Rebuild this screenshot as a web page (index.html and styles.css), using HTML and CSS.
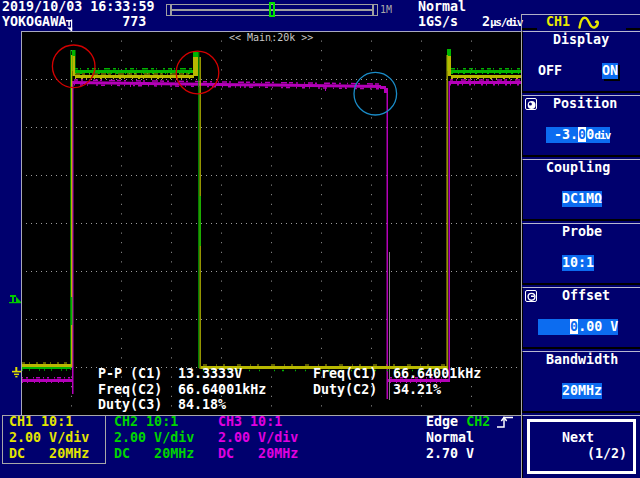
FILE: index.html
```html
<!DOCTYPE html>
<html lang="en">
<head>
<meta charset="utf-8">
<title>Oscilloscope</title>
<link rel="stylesheet" href="styles.css">
</head>
<body>
<div class="scope">
  <div class="left">
    <header class="topbar">
      <div class="date">2019/10/03 16:33:59</div>
      <div class="brand">
        <span>YOKOGAWA</span>
        <svg class="tmark" width="10" height="16" viewBox="0 0 10 16">
          <rect x="0" y="5" width="6" height="1.5" fill="#fff"/>
          <rect x="2.3" y="5" width="1.5" height="6" fill="#fff"/>
          <rect x="5" y="4.5" width="1.2" height="10" fill="#fff"/>
          <polygon points="1,12.5 6.2,12.5 6.2,17" fill="#fff"/>
        </svg>
        <span class="count">773</span>
      </div>
      <div class="timeline">
        <div class="tl-end"></div>
        <div class="tl-bars">
          <div class="tl-bar"></div>
          <div class="tl-bar"></div>
          <div class="tl-pos"></div>
        </div>
        <div class="tl-end"></div>
        <span class="tl-len">1M</span>
      </div>
      <div class="mode">Normal</div>
      <div class="rate">1GS/s</div>
      <div class="tdiv">2<span class="small">μs/div</span></div>
    </header>

    <div class="screen">
      <svg class="gutter" width="21" height="384" viewBox="0 31 21 384">
        <g fill="#00c800">
          <rect x="10" y="295" width="6" height="2"/>
          <rect x="12" y="295" width="2" height="7"/>
          <polygon points="16,296.5 16,302 21,302"/>
          <rect x="9" y="302" width="13" height="1.2"/>
        </g>
        <g fill="#e0e000">
          <rect x="15.3" y="367" width="2" height="4"/>
          <rect x="12" y="370.8" width="9" height="1.6"/>
          <rect x="14" y="373.6" width="5" height="1.5"/>
          <rect x="15.3" y="376" width="2.2" height="1.4"/>
        </g>
      </svg>
      <div class="grat">
        <svg class="wave" width="499" height="383" viewBox="22 32 499 383">
          <g stroke="#9c9c9c" stroke-width="1" fill="none">
            <g stroke-dasharray="1 8.6">
              <line x1="71.5" y1="31" x2="71.5" y2="415"/>
              <line x1="121.5" y1="31" x2="121.5" y2="415"/>
              <line x1="171.5" y1="31" x2="171.5" y2="415"/>
              <line x1="221.5" y1="31" x2="221.5" y2="415"/>
              <line x1="271.5" y1="31" x2="271.5" y2="415"/>
              <line x1="321.5" y1="31" x2="321.5" y2="415"/>
              <line x1="371.5" y1="31" x2="371.5" y2="415"/>
              <line x1="421.5" y1="31" x2="421.5" y2="415"/>
              <line x1="471.5" y1="31" x2="471.5" y2="415"/>
            </g>
            <g stroke-dasharray="1 4">
              <line x1="21" y1="79.5" x2="521" y2="79.5"/>
              <line x1="21" y1="127.5" x2="521" y2="127.5"/>
              <line x1="21" y1="175.5" x2="521" y2="175.5"/>
              <line x1="21" y1="223.5" x2="521" y2="223.5"/>
              <line x1="21" y1="271.5" x2="521" y2="271.5"/>
              <line x1="21" y1="319.5" x2="521" y2="319.5"/>
              <line x1="21" y1="367.5" x2="521" y2="367.5"/>
            </g>
          </g>

          <text x="229" y="40.5" class="svgtxt">&lt;&lt; Main:20k &gt;&gt;</text>

          <!-- magenta CH3 -->
          <g fill="#b400b8">
            <rect x="22" y="379" width="50" height="3"/>
            <rect x="72" y="81" width="1.5" height="313"/>
            <polygon points="73,81 381,85 381,88 73,84"/>
            <rect x="380" y="86" width="6" height="3"/>
            <rect x="384" y="88" width="3" height="5"/>
            <rect x="386.5" y="88" width="1.5" height="311"/>
            <rect x="388" y="379" width="61" height="3"/>
            <rect x="448.5" y="81" width="1.5" height="301"/>
            <rect x="450" y="81" width="71" height="3"/>
            <rect x="130" y="84" width="1" height="3"/>
            <rect x="240" y="85" width="1" height="3"/>
            <rect x="325" y="86" width="1" height="5"/>
            <rect x="345" y="86" width="1" height="3"/>
          </g>
          <g stroke="#b400b8" fill="none">
            <line x1="74" y1="80" x2="380" y2="84" stroke-width="1.5" stroke-dasharray="4 3 2 6 1 3 5 2 2 7 6 2"/>
            <line x1="74" y1="84.8" x2="380" y2="88.8" stroke-width="1.5" stroke-dasharray="1 5 3 4 1 8 2 3 4 6"/>
            <line x1="450" y1="80" x2="521" y2="80" stroke-width="1.5" stroke-dasharray="3 3 1 4 5 2"/>
            <line x1="450" y1="84.8" x2="521" y2="84.8" stroke-width="1.5" stroke-dasharray="1 6 2 3"/>
            <line x1="22" y1="377.8" x2="70" y2="377.8" stroke-width="1.5" stroke-dasharray="1 3 2 5 1 2 4 3"/>
            <line x1="390" y1="377.8" x2="446" y2="377.8" stroke-width="1.5" stroke-dasharray="2 4 1 3 3 2"/>
            <line x1="22" y1="382.5" x2="70" y2="382.5" stroke-width="1" stroke-dasharray="1 4 1 6"/>
            <line x1="390" y1="382.5" x2="446" y2="382.5" stroke-width="1" stroke-dasharray="1 5 1 3"/>
          </g>
          <rect x="389" y="252" width="1" height="148" fill="#808080"/>

          <!-- green CH2 -->
          <g fill="#00b400">
            <rect x="22" y="366" width="49" height="3"/>
            <rect x="202" y="366" width="246" height="3"/>
            <rect x="70.3" y="50" width="1" height="320"/>
            <rect x="72" y="50" width="3.5" height="21"/>
            <rect x="75" y="70" width="119" height="3"/>
            <rect x="193" y="52" width="5" height="19"/>
            <rect x="198.3" y="52" width="1" height="316"/>
            <rect x="447" y="49" width="4" height="22"/>
            <rect x="451" y="70" width="70" height="3"/>
          </g>
          <g stroke="#00b400" fill="none">
            <line x1="75" y1="68.8" x2="193" y2="68.8" stroke-width="1.6" stroke-dasharray="3 2 1 6 2 3 4 2 1 5 6 3"/>
            <line x1="75" y1="73.5" x2="193" y2="73.5" stroke-width="1" stroke-dasharray="1 4 2 7 1 3"/>
            <line x1="451" y1="68.8" x2="521" y2="68.8" stroke-width="1.6" stroke-dasharray="4 2 1 5 3 3"/>
            <line x1="451" y1="73.5" x2="521" y2="73.5" stroke-width="1" stroke-dasharray="2 5 1 4"/>
            <line x1="22" y1="370" x2="70" y2="370" stroke-width="1.6" stroke-dasharray="1 6 1 9 1 4"/>
            <line x1="203" y1="370.5" x2="446" y2="370.5" stroke-width="1.6" stroke-dasharray="1 9 1 14 1 7 2 11"/>
          </g>

          <!-- yellow CH1 -->
          <g fill="#b8b800">
            <rect x="22" y="364" width="49" height="3"/>
            <rect x="71" y="55" width="1.3" height="312"/>
            <rect x="72.5" y="56" width="2.5" height="20"/>
            <rect x="75" y="75" width="119" height="3"/>
            <rect x="193" y="57" width="5" height="19"/>
            <rect x="199.5" y="57" width="1.3" height="312"/>
            <rect x="201" y="366" width="246" height="3"/>
            <rect x="446.5" y="55" width="1.3" height="314"/>
            <rect x="448" y="56" width="3" height="20"/>
            <rect x="451" y="75" width="70" height="3"/>
          </g>
          <g stroke="#b8b800" fill="none">
            <line x1="75" y1="74" x2="193" y2="74" stroke-width="1" stroke-dasharray="5 2 3 4 1 2 6 3"/>
            <line x1="75" y1="78.5" x2="193" y2="78.5" stroke-width="1" stroke-dasharray="1 5 2 3 1 7"/>
            <line x1="451" y1="78.5" x2="521" y2="78.5" stroke-width="1" stroke-dasharray="2 4 1 6"/>
            <line x1="22" y1="363" x2="70" y2="363" stroke-width="1" stroke-dasharray="3 4 1 6 2 5"/>
            <line x1="203" y1="365" x2="446" y2="365" stroke-width="1" stroke-dasharray="4 9 1 6 2 12"/>
          </g>
          <rect x="199.5" y="196" width="1.3" height="50" fill="#00b400"/>
          <rect x="71" y="297" width="1.3" height="28" fill="#00b400"/>

          <g fill="none" stroke-width="1.3">
            <circle cx="73.7" cy="66.3" r="21.3" stroke="#d40000"/>
            <circle cx="197.5" cy="72.5" r="21.3" stroke="#d40000"/>
            <circle cx="375.3" cy="93.7" r="21.3" stroke="#1a8cc8"/>
          </g>
        </svg>
        <div class="meas">
          <span>P-P (C1)</span><span>13.3333V</span><span>Freq(C1)</span><span>66.64001kHz</span>
          <span>Freq(C2)</span><span>66.64001kHz</span><span>Duty(C2)</span><span>34.21%</span>
          <span>Duty(C3)</span><span>84.18%</span>
        </div>
      </div>
    </div>

    <footer class="info">
      <div class="chbox c1">
        <div class="lines">
          <div>CH1 10:1</div>
          <div>2.00 V/div</div>
          <div>DC   20MHz</div>
        </div>
      </div>
      <div class="chinfo c2">
        <div class="lines">
          <div>CH2 10:1</div>
          <div>2.00 V/div</div>
          <div>DC   20MHz</div>
        </div>
      </div>
      <div class="chinfo c3">
        <div class="lines">
          <div>CH3 10:1</div>
          <div>2.00 V/div</div>
          <div>DC   20MHz</div>
        </div>
      </div>
      <div class="trig">
        <div class="lines">
          <div class="trig-l1"><span>Edge&#160;</span><span class="c2">CH2</span><svg class="edge" width="16" height="12" viewBox="0 0 16 12"><path d="M0 11 H7 V1.5 H16" fill="none" stroke="#fff" stroke-width="1.5"/><path d="M4.3 5 L7 1.5 L9.7 5" fill="none" stroke="#fff" stroke-width="1.4"/></svg></div>
          <div>Normal</div>
          <div>2.70 V</div>
        </div>
      </div>
    </footer>
  </div>

  <aside class="right">
    <div class="panel">
      <div class="chtab">
        <span>CH1</span>
        <svg class="chicon" width="23" height="14" viewBox="0 0 23 14">
          <path d="M1.5 12.5 C2.5 5 5 1.5 8 3 C10.5 4.5 11 9 13.5 11.5 C15.5 13.5 18.5 12.5 19.5 9.5 C20.3 7 19.5 5.5 18 7" fill="none" stroke="#e8e800" stroke-width="2.4" stroke-linecap="round"/>
        </svg>
      </div>

      <section class="sec">
        <div class="sec-title pad-30">Display</div>
        <div class="sec-val pad-15"><span>OFF</span><span class="hl on">ON</span></div>
      </section>

      <section class="sec">
        <div class="sec-title pad-2">
          <svg class="knob" width="12" height="12" viewBox="0 0 12 12">
            <rect x="0.5" y="0.5" width="11" height="11" rx="1.5" fill="none" stroke="#fff"/>
            <circle cx="6.6" cy="7" r="3.9" fill="#fff"/>
            <circle cx="5.4" cy="6" r="1.5" fill="#00006e"/>
          </svg>
          <span class="ttl-16">Position</span>
        </div>
        <div class="sec-val pad-23"><span class="hl"> -3.<span class="cur">0</span>0<span class="small">div</span></span></div>
      </section>

      <section class="sec">
        <div class="sec-title pad-23">Coupling</div>
        <div class="sec-val pad-39"><span class="hl">DC1MΩ</span></div>
      </section>

      <section class="sec">
        <div class="sec-title pad-39">Probe</div>
        <div class="sec-val pad-39"><span class="hl">10:1</span></div>
      </section>

      <section class="sec">
        <div class="sec-title pad-2">
          <svg class="knob" width="12" height="12" viewBox="0 0 12 12">
            <rect x="0.5" y="0.5" width="11" height="11" rx="1.5" fill="none" stroke="#fff"/>
            <circle cx="6.5" cy="6.8" r="3.4" fill="none" stroke="#fff" stroke-width="1.4"/>
            <rect x="6" y="5.5" width="3" height="1.5" fill="#fff"/>
          </svg>
          <span class="ttl-25">Offset</span>
        </div>
        <div class="sec-val pad-15"><span class="hl">    <span class="cur">0</span>.00 V</span></div>
      </section>

      <section class="sec">
        <div class="sec-title pad-23">Bandwidth</div>
        <div class="sec-val pad-39"><span class="hl">20MHz</span></div>
      </section>

      <section class="sec last">
        <div class="btn">
          <div class="btn-l1">Next</div>
          <div class="btn-l2">(1/2)</div>
        </div>
      </section>
    </div>
  </aside>
</div>
</body>
</html>
```
FILE: styles.css
```css
* { box-sizing: border-box; }
html, body { margin: 0; padding: 0; }
body {
  width: 640px;
  height: 478px;
  overflow: hidden;
  background: #00006e;
  color: #fff;
  font-family: "DejaVu Sans Mono", "Liberation Mono", monospace;
  font-weight: bold;
  font-size: 13.33px;
}
.scope { display: flex; width: 640px; height: 478px; }
.left { width: 521px; flex: none; display: flex; flex-direction: column; }

/* top bar */
.topbar {
  height: 31px;
  flex: none;
  display: grid;
  grid-template-columns: 164px 252px 64px 1fr;
  grid-template-rows: 14.5px 14.5px;
  padding-left: 2px;
  line-height: 14.5px;
}
.date { grid-column: 1; grid-row: 1; white-space: pre; }
.brand { grid-column: 1; grid-row: 2; display: flex; align-items: flex-start; }
.tmark { flex: none; overflow: visible; }
.count { margin-left: 46px; }
.timeline {
  grid-column: 2;
  grid-row: 1 / span 2;
  display: flex;
  align-items: flex-start;
  margin-top: 4px;
}
.tl-end { width: 5px; height: 12px; border: 1px solid #a0a0a0; flex: none; }
.tl-bars { width: 202px; flex: none; position: relative; display: flex; flex-direction: column; }
.tl-bar { height: 6px; border: 1px solid #a0a0a0; }
.tl-pos {
  position: absolute;
  left: 98px;
  top: -2px;
  width: 6px;
  height: 15px;
  border: 2px solid #00e000;
}
.tl-len { margin-left: 2px; font-size: 10px; line-height: 11px; font-weight: normal; color: #a8a8a8; }
.mode { grid-column: 3; grid-row: 1; }
.rate { grid-column: 3; grid-row: 2; }
.tdiv { grid-column: 4; grid-row: 2; white-space: nowrap; }
.small { font-size: 11px; letter-spacing: -1.3px; }

/* screen */
.screen { height: 384px; flex: none; display: flex; }
.gutter { display: block; flex: none; }
.grat {
  width: 500px;
  flex: none;
  position: relative;
  background: #000;
  border-left: 1px solid #a8a8b8;
  border-top: 1px solid #a8a8c0;
}
.wave { display: block; }
.svgtxt { font-family: "DejaVu Sans Mono", monospace; font-size: 10px; fill: #c8c8c8; font-weight: normal; }
.meas {
  position: absolute;
  left: 76px;
  top: 334.4px;
  display: grid;
  grid-template-columns: 80px 135px 80px auto;
  line-height: 15.5px;
  color: #fff;
}
.meas span { white-space: pre; }

/* bottom info */
.info {
  height: 63px;
  flex: none;
  margin-left: 2px;
  border-top: 1px solid #a8a8a8;
  display: flex;
  line-height: 16px;
}
.lines { margin-top: -2px; }
.lines > div { white-space: pre; height: 16px; }
.chbox {
  width: 104px;
  height: 48px;
  flex: none;
  border: 1px solid #a8a8a8;
  border-top: 0;
  padding-left: 6px;
}
.chinfo { width: 104px; flex: none; padding-left: 8px; }
.trig { margin-left: 112px; }
.lines > .trig-l1 { display: flex; align-items: center; }
.edge { margin-left: 7px; flex: none; }
.c1 { color: #e4e400; }
.c2 { color: #00d400; }
.c3 { color: #e000e0; }

/* right panel */
.right { width: 119px; flex: none; padding-top: 14px; display: flex; flex-direction: column; }
.panel {
  flex: 1;
  border-left: 1px solid #a8a8a8;
  display: flex;
  flex-direction: column;
  overflow: hidden;
}
.chtab {
  height: 17px;
  flex: none;
  border-top: 1px solid #b0b0c8;
  display: flex;
  align-items: flex-start;
  padding-left: 24px;
  line-height: 14.5px;
  color: #e8e800;
  background:
    linear-gradient(#000, #000) left 0 bottom 1px / 15px 2px no-repeat,
    linear-gradient(#000, #000) right 0 bottom 1px / 14px 2px no-repeat;
}
.chicon { margin-left: 8px; flex: none; }
.sec {
  height: 62px;
  flex: none;
  margin-bottom: 2px;
  border-top: 1px solid #b8b8d0;
  border-bottom: 2px solid #000;
  border-left: 1px solid #000;
}
.sec.last { height: 63px; margin-bottom: 0; border-bottom: 0; }
.sec-title { display: flex; align-items: center; height: 15.5px; line-height: 15.5px; }
.sec-val { display: flex; margin-top: 15.5px; height: 16px; line-height: 16px; }
.sec-val span { white-space: pre; }
.pad-2 { padding-left: 2px; }
.pad-15 { padding-left: 15px; }
.pad-23 { padding-left: 23px; }
.pad-30 { padding-left: 30px; }
.pad-39 { padding-left: 39px; }
.ttl-16 { margin-left: 16px; }
.ttl-25 { margin-left: 25px; }
.knob { flex: none; }
.hl { background: #0c6cf0; color: #fff; }
.on { margin-left: 40px; box-shadow: 2px 2px 0 #000; }
.cur { background: #fff; color: #0c6cf0; }
.btn {
  margin: 3px 0 0 4px;
  width: 109px;
  height: 55px;
  border: 3px solid #fff;
  padding-top: 8.4px;
  line-height: 15.5px;
}
.btn-l1 { padding-left: 32px; }
.btn-l2 { padding-left: 57px; }
```
